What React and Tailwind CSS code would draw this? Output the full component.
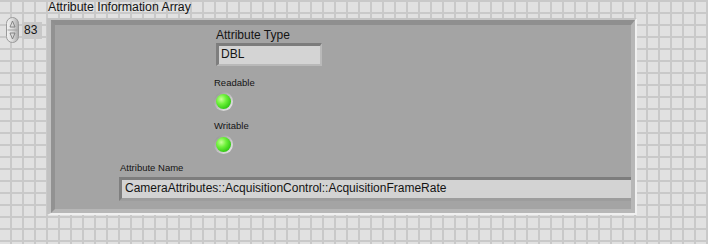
import React from "react";

const font = { fontFamily: '"Liberation Sans", Arial, sans-serif' };

function Spinner() {
  return (
    <svg width="13" height="26" viewBox="0 0 13 26" className="block">
      <defs>
        <linearGradient id="spg" x1="0" x2="1" y1="0" y2="0">
          <stop offset="0" stopColor="#f4f4f4" />
          <stop offset="0.55" stopColor="#d6d6d6" />
          <stop offset="1" stopColor="#a8a8a8" />
        </linearGradient>
      </defs>
      <rect x="0.5" y="0.5" width="12" height="25" rx="6" fill="url(#spg)" stroke="#9a9a9a" />
      <line x1="1.5" y1="13" x2="11.5" y2="13" stroke="#a0a0a0" />
      <path d="M6.5 4 L9 10 L4 10 Z" fill="none" stroke="#7c7c7c" strokeWidth="0.9" />
      <path d="M6.5 22 L9 16 L4 16 Z" fill="none" stroke="#7c7c7c" strokeWidth="0.9" />
    </svg>
  );
}

function Led() {
  return (
    <div className="w-[19px] h-[19px] rounded-full bg-[linear-gradient(135deg,#8e8e8e,#c4c4c4_55%,#eeeeee)] flex items-center justify-center">
      <div className="w-[15px] h-[15px] rounded-full bg-[radial-gradient(circle_at_35%_35%,#c8ff9a_0%,#6ef23a_35%,#2fc812_75%,#1e9a08_100%)]" />
    </div>
  );
}

export default function App() {
  return (
    <div
      style={font}
      className="w-[708px] h-[244px] overflow-hidden bg-[#e1e1e1] bg-[linear-gradient(to_right,#c9c9c9_2px,transparent_2px),linear-gradient(to_bottom,#c9c9c9_2px,transparent_2px)] bg-[size:12px_12px] bg-[position:10px_0px] text-[#141414]"
    >
      {/* array label */}
      <div className="h-[17px] pl-[48px] text-[12.3px] leading-[15px]">Attribute Information Array</div>

      <div className="flex items-start">
        {/* index control */}
        <div className="flex items-center ml-[6px] w-[41px]">
          <Spinner />
          <div className="ml-[3px] mt-[1px] w-[20px] h-[17px] bg-[#c8c8c8] text-[12px] leading-[17px] pl-[2px]">83</div>
        </div>

        {/* array frame */}
        <div className="mt-[1px] w-[590px] h-[197px] border-t-[2px] border-l-[4px] border-r-[2px] border-b-[2px] border-t-[#c4c4c4] border-l-[#c2c2c2] border-r-[#f0f0f0] border-b-[#f0f0f0]">
          <div className="w-full h-full border-t-[5px] border-l-[4px] border-r-[4px] border-b-[4px] border-t-[#8f8f8f] border-l-[#929292] border-r-[#b7b7b7] border-b-[#b7b7b7] bg-[#a4a4a4]">
            <div className="flex flex-col h-full">
              {/* attribute type + LEDs */}
              <div className="pl-[161px] pt-[3px]">
                <div className="text-[12px] leading-[15px]">Attribute Type</div>
                <div className="w-[106px] h-[23px] border-t-[3px] border-l-[3px] border-r-[2px] border-b-[2px] border-t-[#7c7c7c] border-l-[#7e7e7e] border-r-[#b9b9b9] border-b-[#b9b9b9] bg-[#d4d4d4] text-[12px] leading-[17px] pl-[2px]">
                  DBL
                </div>
                <div className="mt-[11px] -ml-[2px] text-[9.5px] leading-[12px]">Readable</div>
                <div className="mt-[3px] -ml-[2px]">
                  <Led />
                </div>
                <div className="mt-[9px] -ml-[2px] text-[9.5px] leading-[12px]">Writable</div>
                <div className="mt-[3px] -ml-[2px]">
                  <Led />
                </div>
              </div>

              {/* attribute name */}
              <div className="pl-[64px] mt-[8px]">
                <div className="pl-[1px] text-[9.5px] leading-[12px]">Attribute Name</div>
                <div className="mt-[3px] h-[24px] border-t-[3px] border-l-[3px] border-b-[3px] border-t-[#7d7d7d] border-l-[#7f7f7f] border-b-[#9d9d9d] bg-[#d3d3d3] text-[12px] leading-[17px] pl-[3px]">
                  CameraAttributes::AcquisitionControl::AcquisitionFrameRate
                </div>
              </div>
            </div>
          </div>
        </div>
      </div>
    </div>
  );
}
